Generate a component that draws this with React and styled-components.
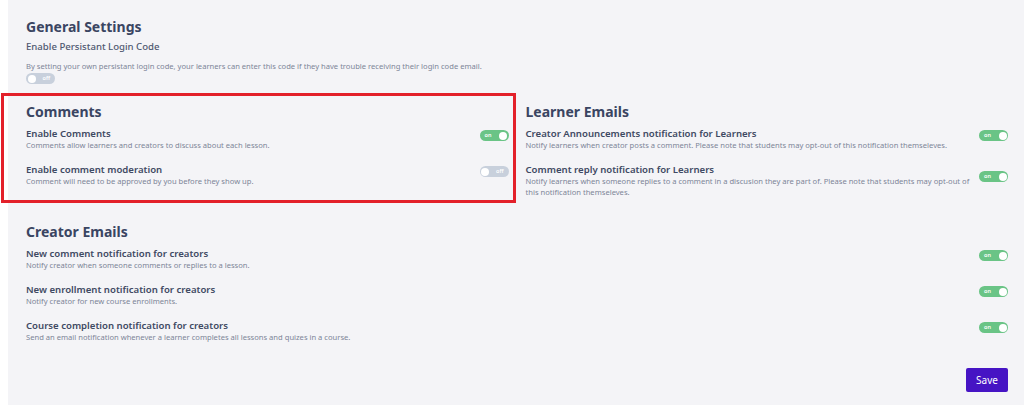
import styled, { createGlobalStyle } from 'styled-components';

const GlobalStyle = createGlobalStyle`
  body {
    margin: 0;
    background: #ffffff;
    font-family: "Noto Sans", "Open Sans", sans-serif;
  }
`;

const Panel = styled.main`
  position: relative;
  margin-left: 8px;
  min-height: 405px;
  box-sizing: border-box;
  background: #f4f4f7;
  padding: 17px 16px 13px 18px;
`;

const Section = styled.section`
  position: relative;
  align-self: start;
`;

const Columns = styled.div`
  display: grid;
  grid-template-columns: 1fr 1fr;
  column-gap: 17px;
  margin-top: 18px;
  margin-bottom: 12px;
`;

const Heading = styled.h2`
  margin: 0 0 5px 0;
  font-size: 14px;
  line-height: 20px;
  font-weight: 700;
  color: #3a4562;
`;

const Row = styled.div`
  display: flex;
  align-items: flex-start;
  justify-content: space-between;
  gap: 5px;
  margin-bottom: 12px;
`;

const Text = styled.div`
  flex: 1;
  min-width: 0;
`;

const Label = styled.div`
  font-size: 9.6px;
  line-height: 13px;
  font-weight: 600;
  color: #3f4a63;
`;

const PlainLabel = styled(Label)`
  margin-top: -2px;
  margin-bottom: 7.5px;
  font-weight: 500;
  color: #4f5870;
`;

const Desc = styled.div`
  font-size: 7.6px;
  line-height: 11px;
  color: #7d8597;
`;

const Toggle = styled.span`
  position: relative;
  display: flex;
  align-items: center;
  justify-content: ${({ $on }) => ($on ? 'flex-start' : 'flex-end')};
  flex: none;
  box-sizing: border-box;
  width: 29px;
  height: 11px;
  margin-top: ${({ $top }) => $top || 0}px;
  padding: 0 5px;
  border-radius: 6px;
  background: ${({ $on }) => ($on ? '#6ac486' : '#c8d0dc')};
  color: #ffffff;
  font-size: 5.5px;
  line-height: 11px;
  font-weight: 600;

  &::after {
    content: '';
    position: absolute;
    top: 1.5px;
    ${({ $on }) => ($on ? 'right: 1.5px;' : 'left: 1.5px;')}
    width: 8px;
    height: 8px;
    border-radius: 50%;
    background: #ffffff;
  }
`;

const Highlight = styled.div`
  position: absolute;
  left: -25px;
  top: -9px;
  right: -7px;
  bottom: -4px;
  border: 3px solid #e3202a;
  pointer-events: none;
`;

const Footer = styled.div`
  display: flex;
  justify-content: flex-end;
  margin-top: 24.5px;
`;

const SaveButton = styled.button`
  width: 42px;
  height: 24px;
  border: none;
  border-radius: 2px;
  background: #4614c4;
  color: #ffffff;
  font-family: inherit;
  font-size: 10px;
  cursor: pointer;
`;

const Setting = ({ label, desc, on, top = 3 }) => (
  <Row>
    <Text>
      <Label>{label}</Label>
      <Desc>{desc}</Desc>
    </Text>
    <Toggle $on={on} $top={top}>{on ? 'on' : 'off'}</Toggle>
  </Row>
);

const App = () => {
  return (
    <>
      <GlobalStyle />
      <Panel>
        <Section>
          <Heading>General Settings</Heading>
          <PlainLabel>Enable Persistant Login Code</PlainLabel>
          <Desc>
            By setting your own persistant login code, your learners can enter this code if they have trouble receiving their login code email.
          </Desc>
          <Toggle $top={1.5}>off</Toggle>
        </Section>

        <Columns>
          <Section>
            <Highlight />
            <Heading>Comments</Heading>
            <Setting
              label="Enable Comments"
              desc="Comments allow learners and creators to discuss about each lesson."
              on
            />
            <Setting
              label="Enable comment moderation"
              desc="Comment will need to be approved by you before they show up."
            />
          </Section>
          <Section>
            <Heading>Learner Emails</Heading>
            <Setting
              label="Creator Announcements notification for Learners"
              desc="Notify learners when creator posts a comment. Please note that students may opt-out of this notification themseleves."
              on
            />
            <Setting
              label="Comment reply notification for Learners"
              desc="Notify learners when someone replies to a comment in a discusion they are part of. Please note that students may opt-out of this notification themseleves."
              on
              top={8}
            />
          </Section>
        </Columns>

        <Section>
          <Heading>Creator Emails</Heading>
          <Setting
            label="New comment notification for creators"
            desc="Notify creator when someone comments or replies to a lesson."
            on
          />
          <Setting
            label="New enrollment notification for creators"
            desc="Notify creator for new course enrollments."
            on
          />
          <Setting
            label="Course completion notification for creators"
            desc="Send an email notification whenever a learner completes all lessons and quizes in a course."
            on
          />
        </Section>

        <Footer>
          <SaveButton>Save</SaveButton>
        </Footer>
      </Panel>
    </>
  );
};

export default App;
